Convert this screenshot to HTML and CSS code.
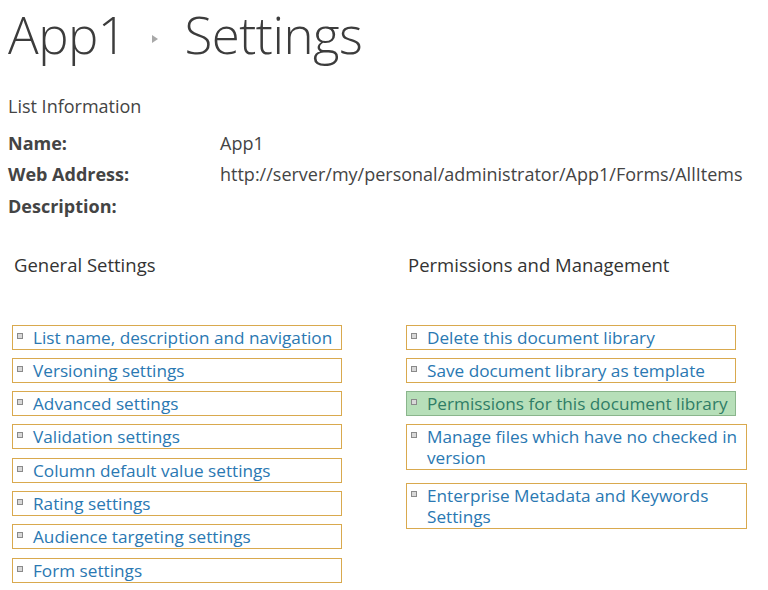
FILE: index.html
```html
<!DOCTYPE html>
<html lang="en">
<head>
    <meta charset="UTF-8">
    <title>App1 - Settings</title>
    <link rel="stylesheet" href="styles.css">
</head>
<body>
    <h1 class="page-title">
        <span>App1</span>
        <span class="crumb-arrow"></span>
        <span>Settings</span>
    </h1>

    <div class="list-info">
        <div class="info-heading">List Information</div>
        <div class="info-grid">
            <div class="info-label">Name:</div>
            <div class="info-value">App1</div>
            <div class="info-label">Web Address:</div>
            <div class="info-value">http://server/my/personal/administrator/App1/Forms/AllItems</div>
            <div class="info-label">Description:</div>
            <div class="info-value"></div>
        </div>
    </div>

    <div class="settings">
        <div class="settings-col">
            <h3 class="col-title">General Settings</h3>
            <ul class="link-list">
                <li><a href="#">List name, description and navigation</a></li>
                <li><a href="#">Versioning settings</a></li>
                <li><a href="#">Advanced settings</a></li>
                <li><a href="#">Validation settings</a></li>
                <li><a href="#">Column default value settings</a></li>
                <li><a href="#">Rating settings</a></li>
                <li><a href="#">Audience targeting settings</a></li>
                <li><a href="#">Form settings</a></li>
            </ul>
        </div>
        <div class="settings-col">
            <h3 class="col-title">Permissions and Management</h3>
            <ul class="link-list">
                <li><a href="#">Delete this document library</a></li>
                <li><a href="#">Save document library as template</a></li>
                <li class="selected"><a href="#">Permissions for this document library</a></li>
                <li class="wide"><a href="#">Manage files which have no checked in version</a></li>
                <li class="wide"><a href="#">Enterprise Metadata and Keywords Settings</a></li>
            </ul>
        </div>
    </div>
</body>
</html>
```

FILE: styles.css
```css
body {
    margin: 0;
    padding: 0 0 0 8px;
    background: #ffffff;
    color: #444444;
    font-family: 'Open Sans', 'Noto Sans', sans-serif;
    font-size: 18px;
}

.page-title {
    display: flex;
    align-items: center;
    gap: 26px;
    margin: 0;
    font-size: 51px;
    font-weight: 300;
    line-height: 68px;
    color: #3c3c3c;
    letter-spacing: -0.5px;
}

.crumb-arrow {
    width: 0;
    height: 0;
    margin-top: 10px;
    border-left: 6px solid #a8a8a8;
    border-top: 4px solid transparent;
    border-bottom: 4px solid transparent;
}

.list-info {
    margin-top: 26px;
}

.info-heading {
    line-height: 24px;
    margin-bottom: 9px;
}

.info-grid {
    display: grid;
    grid-template-columns: 212px auto;
    grid-auto-rows: 31.5px;
    align-items: center;
}

.info-label {
    font-weight: 700;
    color: #444444;
}

.info-value {
    color: #444444;
}

.settings {
    display: flex;
    margin-top: 31px;
    padding-left: 4px;
}

.settings-col {
    flex: 0 0 394px;
}

.col-title {
    margin: 0 0 48px 2px;
    font-size: 18.5px;
    font-weight: 400;
    line-height: 24px;
    color: #333333;
}

.link-list {
    list-style: none;
    margin: 0;
    padding: 0;
    display: flex;
    flex-direction: column;
    gap: 8.3px;
}

.link-list li {
    position: relative;
    width: 330px;
    box-sizing: border-box;
    border: 1px solid #d9a94e;
    padding: 1px 6px 1px 20px;
    font-size: 17.2px;
    line-height: 21px;
    background: #ffffff;
}

.link-list li::before {
    content: "";
    position: absolute;
    left: 4px;
    top: 7px;
    width: 4px;
    height: 4px;
    border: 1px solid #8a8a8a;
    background: #d8d8d8;
}

.link-list li.wide {
    width: 341px;
    margin-bottom: 4px;
}

.link-list li.selected {
    background: #b7dfb9;
    border-color: #8ab58c;
}

.link-list a {
    color: #2a78b2;
    text-decoration: none;
}

.link-list li.selected a {
    color: #2f7d66;
}
```
